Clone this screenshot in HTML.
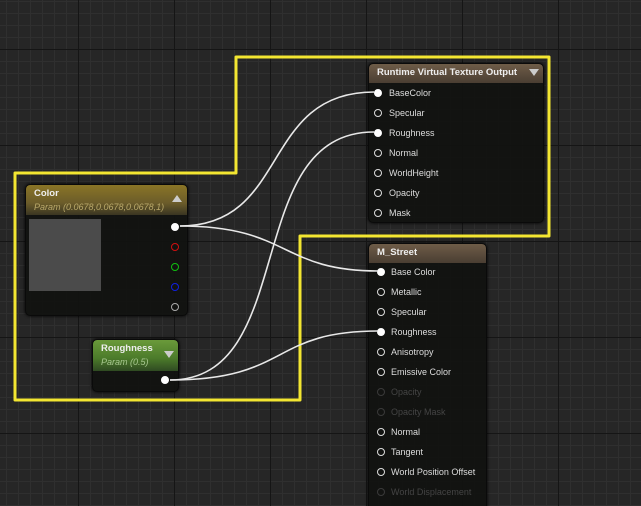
<!DOCTYPE html>
<html><head><style>
*{margin:0;padding:0;box-sizing:border-box}
html{width:641px;height:506px;overflow:hidden}
body{width:641px;height:506px;overflow:hidden;position:relative;font-family:"Liberation Sans",sans-serif;
background-color:#262626;
background-image:
linear-gradient(to right,#151515 1px,transparent 1px),
linear-gradient(to bottom,#151515 1px,transparent 1px),
linear-gradient(to right,#2f2f2f 1px,transparent 1px),
linear-gradient(to bottom,#2f2f2f 1px,transparent 1px);
background-size:96px 96px,96px 96px,12px 12px,12px 12px;
background-position:78px 0,0 49px,6px 0,0 1px;}
.node{position:absolute;background:rgba(18,19,17,0.96);border-radius:5px;box-shadow:0 0 3px #000;border:1px solid #0a0a0a;overflow:hidden}
.hd{position:absolute;left:0;right:0;top:0;border-radius:4px 4px 0 0;color:#eee;font-weight:bold;font-size:9.5px;padding:3px 8px;white-space:nowrap}
.sub{font-weight:normal;font-style:italic;font-size:9px;color:#b9a86a;margin-top:3px}
.row{position:absolute;font-size:9px;color:#ddd;white-space:nowrap}
.pin{position:absolute;width:8px;height:8px;border-radius:50%;border:1.5px solid #ddd}
.pin.f{background:#fff;border-color:#fff}
.dim{color:#444}
.pin.d{border-color:#3a3a3a}
.tri{position:absolute;width:0;height:0;border-left:5px solid transparent;border-right:5px solid transparent}
</style></head><body>
<svg width="641" height="506" style="position:absolute;left:0;top:0">
<path d="M236 57 H549 V236 H300 V400 H15 V173 H236 Z" fill="none" stroke="#f3e631" stroke-width="3" stroke-linejoin="round"/>
</svg>

<div class="node" style="left:25px;top:184px;width:163px;height:132px">
 <div class="hd" style="height:30px;background:linear-gradient(to bottom,#8a7526,#6b5c2a 60%,#3a3522)">Color<div class="sub">Param (0.0678,0.0678,0.0678,1)</div></div>
 <div class="tri" style="left:146px;top:10px;border-bottom:7px solid #ccc"></div>
 <div style="position:absolute;left:3px;top:34px;width:72px;height:72px;background:#4b4b4b"></div>
 <div class="pin f" style="left:145px;top:38px"></div>
 <div class="pin" style="left:145px;top:58px;border-color:#d01010"></div>
 <div class="pin" style="left:145px;top:78px;border-color:#10c010"></div>
 <div class="pin" style="left:145px;top:98px;border-color:#1020e0"></div>
 <div class="pin" style="left:145px;top:118px;border-color:#aaa"></div>
</div>

<div class="node" style="left:92px;top:339px;width:87px;height:53px">
 <div class="hd" style="height:31px;background:linear-gradient(to bottom,#6a9a3a,#4b7a2a 60%,#2f4a22)">Roughness<div class="sub" style="color:#a8c890">Param (0.5)</div></div>
 <div class="tri" style="left:71px;top:11px;border-top:7px solid #ccc"></div>
 <div class="pin f" style="left:68px;top:36px"></div>
</div>

<div class="node" style="left:368px;top:63px;width:176px;height:160px">
 <div class="hd" style="height:19px;padding-top:3px;background:linear-gradient(to bottom,#6e5c48,#4a3e32)">Runtime Virtual Texture Output</div>
 <div class="tri" style="left:160px;top:5px;border-top:7px solid #ccc"></div>
 <div class="pin f" style="left:5px;top:25px"></div><div class="row" style="left:20px;top:24px">BaseColor</div>
 <div class="pin" style="left:5px;top:45px"></div><div class="row" style="left:20px;top:44px">Specular</div>
 <div class="pin f" style="left:5px;top:65px"></div><div class="row" style="left:20px;top:64px">Roughness</div>
 <div class="pin" style="left:5px;top:85px"></div><div class="row" style="left:20px;top:84px">Normal</div>
 <div class="pin" style="left:5px;top:105px"></div><div class="row" style="left:20px;top:104px">WorldHeight</div>
 <div class="pin" style="left:5px;top:125px"></div><div class="row" style="left:20px;top:124px">Opacity</div>
 <div class="pin" style="left:5px;top:145px"></div><div class="row" style="left:20px;top:144px">Mask</div>
</div>

<div class="node" style="left:368px;top:243px;width:119px;height:275px">
 <div class="hd" style="height:19px;padding-top:3px;background:linear-gradient(to bottom,#6e5c48,#4a3e32)">M_Street</div>
 <div class="pin f" style="left:8px;top:24px"></div><div class="row" style="left:22px;top:23px">Base Color</div>
 <div class="pin" style="left:8px;top:44px"></div><div class="row" style="left:22px;top:43px">Metallic</div>
 <div class="pin" style="left:8px;top:64px"></div><div class="row" style="left:22px;top:63px">Specular</div>
 <div class="pin f" style="left:8px;top:84px"></div><div class="row" style="left:22px;top:83px">Roughness</div>
 <div class="pin" style="left:8px;top:104px"></div><div class="row" style="left:22px;top:103px">Anisotropy</div>
 <div class="pin" style="left:8px;top:124px"></div><div class="row" style="left:22px;top:123px">Emissive Color</div>
 <div class="pin d" style="left:8px;top:144px"></div><div class="row dim" style="left:22px;top:143px">Opacity</div>
 <div class="pin d" style="left:8px;top:164px"></div><div class="row dim" style="left:22px;top:163px">Opacity Mask</div>
 <div class="pin" style="left:8px;top:184px"></div><div class="row" style="left:22px;top:183px">Normal</div>
 <div class="pin" style="left:8px;top:204px"></div><div class="row" style="left:22px;top:203px">Tangent</div>
 <div class="pin" style="left:8px;top:224px"></div><div class="row" style="left:22px;top:223px">World Position Offset</div>
 <div class="pin d" style="left:8px;top:244px"></div><div class="row dim" style="left:22px;top:243px">World Displacement</div>
</div>

<svg width="641" height="506" style="position:absolute;left:0;top:0">
<g fill="none" stroke="#e8e8e8" stroke-width="1.6">
<path d="M180 226 C290 226 260 92 374 92"/>
<path d="M180 226 C290 226 280 271 378 271"/>
<path d="M170 380 C300 380 240 132 374 132"/>
<path d="M170 380 C290 380 270 331 378 331"/>
</g>
</svg>
</body></html>
